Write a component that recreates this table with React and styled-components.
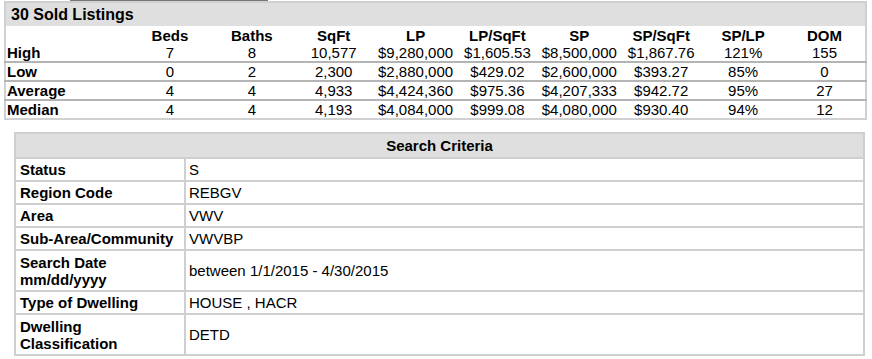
import React from "react";
import styled, { createGlobalStyle } from "styled-components";

const GlobalStyle = createGlobalStyle`
  body {
    margin: 0;
    background: #fff;
    font-family: "Liberation Sans", Arial, sans-serif;
    color: #000;
  }
`;

const Page = styled.div`
  display: flex;
  flex-direction: column;
  padding: 0 0 4px 0;
`;

const EdgeLine = styled.div`
  height: 1px;
  width: 198px;
  margin-left: 70px;
  background: #777;
`;

const StatsTable = styled.table`
  margin: 0 0 0 4px;
  width: 863px;
  border-collapse: collapse;
  border: 2px solid #d0d0d0;
  font-size: 15px;
  table-layout: fixed;
`;

const TitleCell = styled.th`
  background: #dfdfdf;
  text-align: left;
  font-size: 16px;
  font-weight: bold;
  padding: 3px 5px 2px;
  line-height: 18px;
`;

const HeadCell = styled.th`
  font-weight: bold;
  text-align: center;
  padding: 1px 2px 0;
  line-height: 17px;
`;

const StatRow = styled.tr`
  border-top: ${(p) => (p.$line ? "2px solid #b4b4b4" : "none")};
`;

const RowLabel = styled.td`
  font-weight: bold;
  text-align: left;
  padding: 0 1px;
  line-height: 17px;
`;

const Num = styled.td`
  text-align: center;
  padding: 0 2px;
  line-height: 17px;
  white-space: nowrap;
`;

const CriteriaTable = styled.table`
  margin: 12px 0 0 14px;
  width: 851px;
  border-collapse: collapse;
  font-size: 15px;
  table-layout: fixed;
`;

const CriteriaHead = styled.th`
  background: #dfdfdf;
  border: 2px solid #cfcfcf;
  font-weight: bold;
  text-align: center;
  padding: 3px 4px 3px;
  line-height: 17px;
`;

const KeyCell = styled.td`
  border: 2px solid #cfcfcf;
  font-weight: bold;
  padding: ${(p) => (p.$tall ? "3px 4px 2px" : "2px 4px 2px")};
  line-height: 17px;
  vertical-align: middle;
`;

const ValueCell = styled.td`
  border: 2px solid #cfcfcf;
  padding: 2px 3px;
  line-height: 17px;
  vertical-align: middle;
`;

const columns = ["Beds", "Baths", "SqFt", "LP", "LP/SqFt", "SP", "SP/SqFt", "SP/LP", "DOM"];

const stats = [
  ["High", "7", "8", "10,577", "$9,280,000", "$1,605.53", "$8,500,000", "$1,867.76", "121%", "155"],
  ["Low", "0", "2", "2,300", "$2,880,000", "$429.02", "$2,600,000", "$393.27", "85%", "0"],
  ["Average", "4", "4", "4,933", "$4,424,360", "$975.36", "$4,207,333", "$942.72", "95%", "27"],
  ["Median", "4", "4", "4,193", "$4,084,000", "$999.08", "$4,080,000", "$930.40", "94%", "12"],
];

const criteria = [
  ["Status", "S"],
  ["Region Code", "REBGV"],
  ["Area", "VWV"],
  ["Sub-Area/Community", "VWVBP"],
  [["Search Date", "mm/dd/yyyy"], "between 1/1/2015 - 4/30/2015"],
  ["Type of Dwelling", "HOUSE , HACR"],
  [["Dwelling", "Classification"], "DETD"],
];

export default function App() {
  return (
    <>
      <GlobalStyle />
      <Page>
        <EdgeLine />
        <StatsTable>
          <colgroup>
            <col style={{ width: 124 }} />
            {columns.map((c) => (
              <col key={c} />
            ))}
          </colgroup>
          <thead>
            <tr>
              <TitleCell colSpan={10}>30 Sold Listings</TitleCell>
            </tr>
            <tr>
              <HeadCell />
              {columns.map((c) => (
                <HeadCell key={c}>{c}</HeadCell>
              ))}
            </tr>
          </thead>
          <tbody>
            {stats.map((row, i) => (
              <StatRow key={row[0]} $line={i > 0}>
                <RowLabel>{row[0]}</RowLabel>
                {row.slice(1).map((v, j) => (
                  <Num key={j}>{v}</Num>
                ))}
              </StatRow>
            ))}
          </tbody>
        </StatsTable>

        <CriteriaTable>
          <colgroup>
            <col style={{ width: 170 }} />
            <col />
          </colgroup>
          <thead>
            <tr>
              <CriteriaHead colSpan={2}>Search Criteria</CriteriaHead>
            </tr>
          </thead>
          <tbody>
            {criteria.map(([k, v], i) => (
              <tr key={i}>
                <KeyCell $tall={Array.isArray(k)}>
                  {Array.isArray(k) ? (
                    <>
                      {k[0]}
                      <br />
                      {k[1]}
                    </>
                  ) : (
                    k
                  )}
                </KeyCell>
                <ValueCell>{v}</ValueCell>
              </tr>
            ))}
          </tbody>
        </CriteriaTable>
      </Page>
    </>
  );
}
